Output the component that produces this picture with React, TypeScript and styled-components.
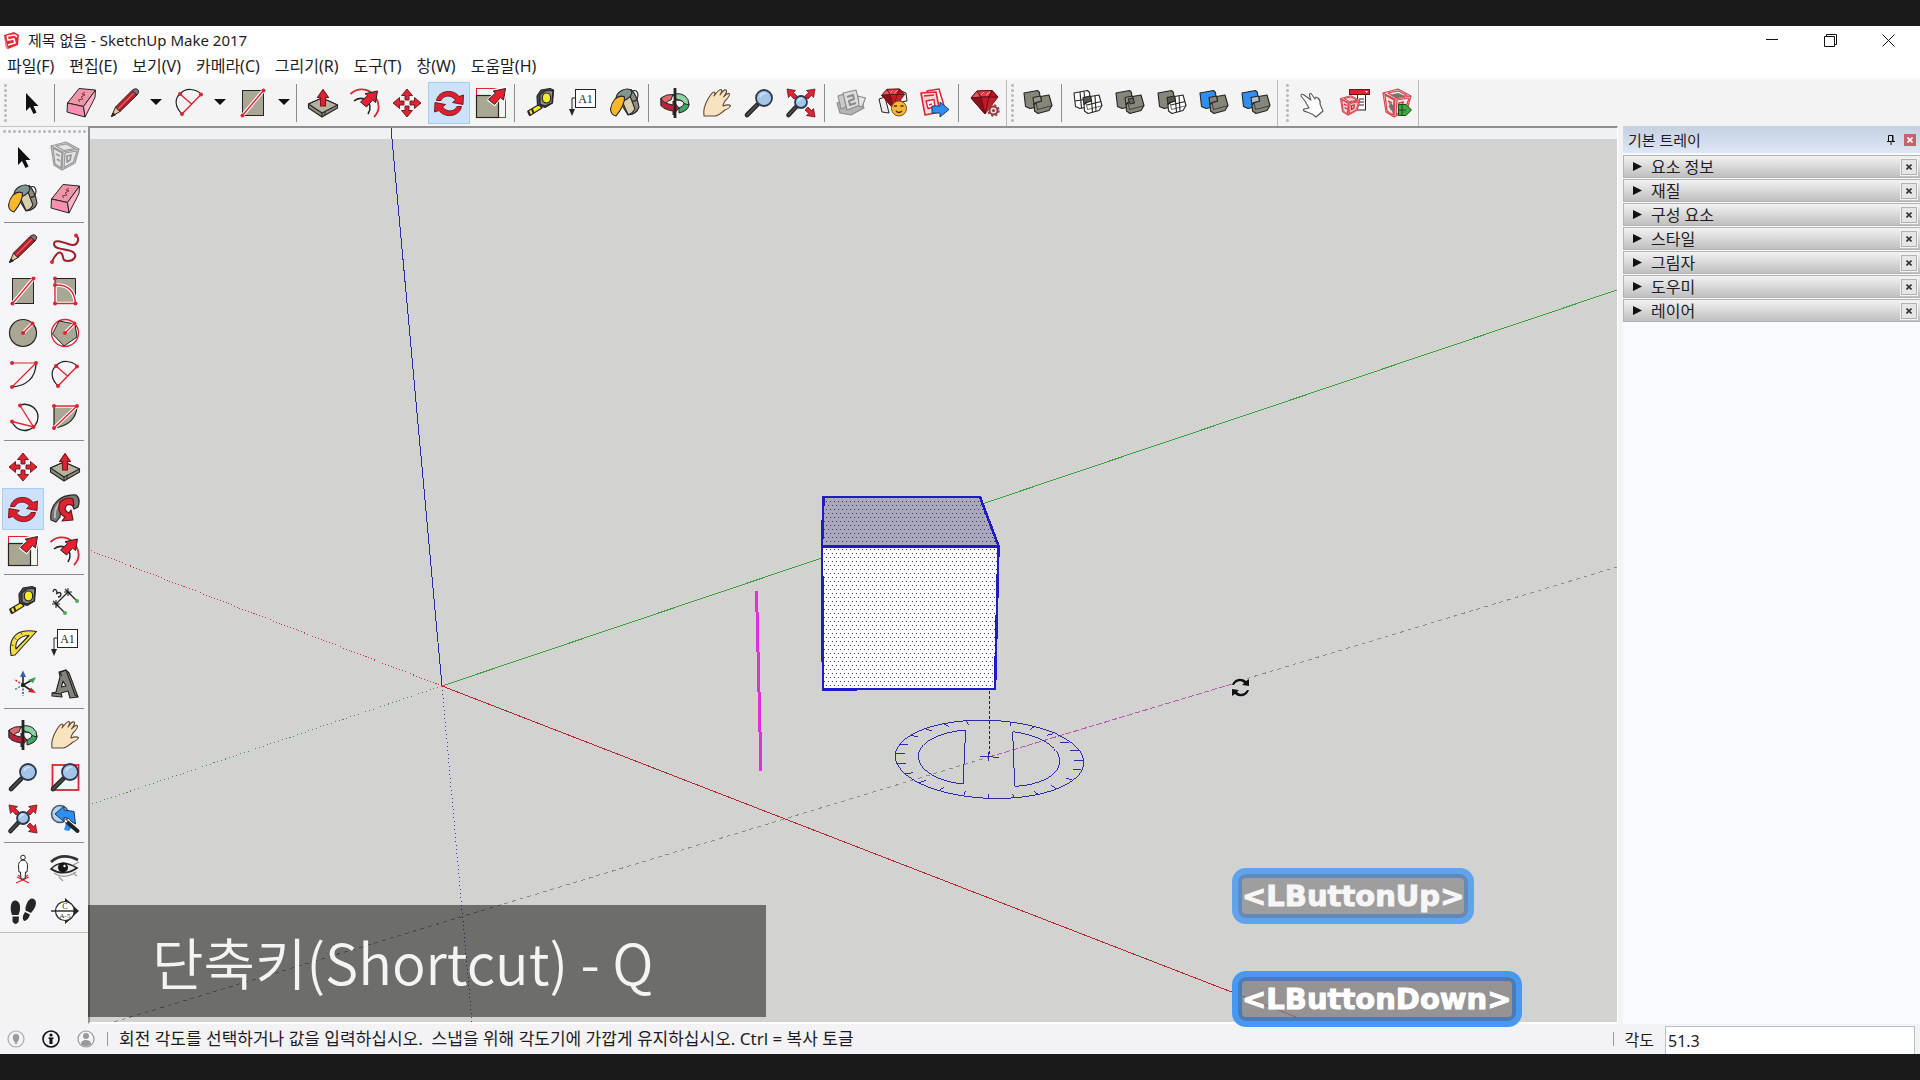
import React from 'react';
import styled, { createGlobalStyle, css } from 'styled-components';

const RED = '#dc2433';
const INK = '#242424';
const TAN = '#a9a794';
const SOLID = '#87867a';
const BLUE = '#2f8ff0';

const GlobalStyle = createGlobalStyle`
  *, *::before, *::after { box-sizing: border-box; }
  html, body { margin: 0; height: 100%; background: #1a1a1a; }
  body, button, input {
    font-family: "Noto Sans", "Noto Sans CJK KR", sans-serif;
    font-size: 15px;
    color: #1f1b24;
  }
  button { padding: 0; border: 0; background: none; cursor: default; }
`;

/* ---------- shared drawing pieces ---------- */

const Dot = ({ x, y }: { x: number; y: number }) => <circle cx={x} cy={y} r="2" fill={RED} />;

const RedLine = ({ d }: { d: string }) => (
  <>
    <path d={d} fill="none" stroke="#fff" strokeWidth="3.6" />
    <path d={d} fill="none" stroke={RED} strokeWidth="1.4" />
  </>
);

const Lens = ({ cx = 21, cy = 11, r = 8, hx = 4, hy = 28 }) => (
  <>
    <path d={`M${cx - r * 0.8} ${cy + r * 0.8} L${hx} ${hy}`} stroke={INK} strokeWidth="4.6" strokeLinecap="round" />
    <path d={`M${cx - r * 0.9} ${cy + r * 0.9} L${hx} ${hy}`} stroke="#4b4b4e" strokeWidth="2" strokeLinecap="round" />
    <circle cx={cx} cy={cy} r={r} fill="#a4c4ea" stroke="#2d3a4c" strokeWidth="1.8" />
    <path d={`M${cx - r * 0.5} ${cy - r * 0.1} Q${cx - r * 0.4} ${cy - r * 0.6} ${cx + r * 0.2} ${cy - r * 0.6}`} fill="none" stroke="#d3e4f7" strokeWidth="1.6" />
  </>
);

const BigArrow = () => (
  <path d="M30.5 1.5 L28.5 13 L25.5 10.5 L19.5 17.5 L13.5 12.5 L20.5 6 L18 4.2 Z" fill="#e6202f" stroke={INK} strokeWidth="1" />
);

const Gem = () => (
  <g stroke="#5e1017" strokeWidth="0.9" strokeLinejoin="round">
    <path d="M2 11 L8 4 L23 3.500 L29 10 L16 27 Z" fill="#c91d2a" />
    <path d="M8 4 L12 10 L2 11 Z" fill="#e85a5f" />
    <path d="M8 4 L23 3.500 L20 10 L12 10 Z" fill="#e23a44" />
    <path d="M23 3.500 L29 10 L20 10 Z" fill="#b31722" />
    <path d="M2 11 L12 10 L16 27 Z" fill="#8f0f1a" />
    <path d="M12 10 L20 10 L16 27 Z" fill="#c21a26" />
    <path d="M12 8 L15 5 M17 8 L21 5" stroke="#ffb9b9" />
  </g>
);

const WireHouse = ({ color, fill }: { color: string; fill: string }) => (
  <g stroke={color} strokeLinejoin="round" fill="none" strokeWidth="1.2">
    <path d="M2 5 L17 1 L30 8 L26 22 L13 29 L5 24 Z" fill={fill} />
    <path d="M2 5 L14 11 L30 8 M14 11 L13 29 M4 7 L13 12 L12 27 L6 23 Z M16 12 L28 10 L24.500 21 L15 26.500 Z M7 5 L17 2.800 L26 7.500 L15 9.500 Z" />
    <path d="M7 13 L11 15 M8 18 L11 20 M18 15 L22 14 L21 19 L18 21 Z" strokeWidth="1.800" />
  </g>
);

const SOLID_A = 'M2 6 L15.500 3.500 L17.500 5.500 L18.500 18 L13 20.500 L8 21.500 L3.500 19.500 Z';
const SOLID_B = 'M14 15.500 L19.500 14 L18.500 9.500 L27 8 L30 18.500 L27 23.500 L16 26.500 L12.500 24 L12 17.500 Z';
const SOLID_AB = 'M11 10.500 L18.500 9 L19.500 14 L14 15.500 L12 17.500 Z';

const SolidPair = ({ a, b, ab, wireA, wireB }: { a: string; b: string; ab: string; wireA?: boolean; wireB?: boolean }) => (
  <g stroke={INK} strokeWidth="1.100" strokeLinejoin="round">
    <path d={SOLID_A} fill={a} />
    <path d={SOLID_B} fill={b} />
    <path d={SOLID_AB} fill={ab} />
    <path d="M14 15.500 L15.500 22.500 M15.500 22.500 L27 19.500 L30 18.500" fill="none" strokeWidth="0.700" />
    {wireA && <path d="M3 14 L12 12.500 M8 5 L9.500 21 M12 4.500 L12.500 10" fill="none" />}
    {wireB && <path d="M15 18 L29 14.500 M23 9 L24 24 M19.500 14 L20.500 25" fill="none" />}
  </g>
);

const Bucket = () => (
  <g stroke={INK} strokeWidth="1.100" strokeLinejoin="round">
    <path d="M9 12 L22 2.500 Q28 8 30 20 Q28 27 19 28 Z" fill="#8f8b80" />
    <path d="M13 14 L21 9 L26 22 Q23 27 19 27.500 Z" fill="#d8cfae" />
    <ellipse cx="15" cy="8" rx="8.500" ry="5" transform="rotate(-28 15 8)" fill="#7f9594" />
    <path d="M6 12 Q11 7.500 15.500 10 Q16 18 7 29 Q2 28 1.500 22 Q2.500 16 6 12 Z" fill="#f8b829" />
    <path d="M23 4 Q29 2 29 9 Q28 15 23 14" fill="none" />
  </g>
);

const HandShape = ({ fill }: { fill: string }) => (
  <path d="M3 29 C2 22 4 17 7 12 Q11 5 13 5 Q15 5 13 9 Q18 2 20 2.500 Q22 3 19 8 Q23 2 25 3 Q27 4 22.500 10 Q27 5 28.500 7 Q29 9 24 14 Q22 17 22 19 Q27 17 29.500 18.500 Q29 21 24 23 Q17 29 14 29 Z" fill={fill} stroke="#5b4a35" strokeWidth="1.100" strokeLinejoin="round" />
);

const half = 'M3.500 13.500 C5.500 3 20.500 1.500 26 9.500 L30.500 8 L30 17.500 L19.500 15.500 L22.500 13 C18.500 7.500 10.500 8 8 13.500 Z';

const icons: Record<string, React.ReactNode> = {
  select: <path d="M11 6 V24 L15 20 L18.500 27 L21.500 25.500 L18.500 19 H23.500 Z" fill="#111" />,
  eraser: (
    <g stroke={INK} strokeWidth="1" strokeLinejoin="round">
      <path d="M14 1.500 L30.500 3 L18.500 19.500 L2.500 16 Z" fill="#f096a6" />
      <path d="M2.500 16 L18.500 19.500 L20 30 L2 25 Z" fill="#ff8fb0" />
      <path d="M30.500 3 L30 10.500 L20 30 L18.500 19.500 Z" fill="#ffb3c9" />
      <path d="M20 5 L17 7 L20 8 L16 10 L18 12 L13 13 L15 15" fill="none" stroke="#803648" />
    </g>
  ),
  pencil: (
    <g stroke={INK} strokeWidth="1" strokeLinejoin="round">
      <path d="M2.500 29.500 L6.500 20 L11 24.500 Z" fill="#e6c795" />
      <path d="M6.500 20 L23 3.500 L28 8 L11 24.500 Z" fill="#b7202b" />
      <path d="M9 22 L25.500 5.500" stroke="#e85b5f" strokeWidth="1.500" />
      <path d="M23 3.500 Q27 0 29.500 3.500 Q30.500 5 28 8 Z" fill="#8b6e74" />
      <path d="M2.500 29.500 L4 26 L6.500 27.800 Z" fill={INK} />
    </g>
  ),
  arc2: (
    <>
      <path d="M9 27 C1 19 2 11 7 7 C13 0 23 2 28 7" fill="none" stroke={INK} strokeWidth="1.200" />
      <path d="M9 27 L28.500 7 M7 7 L18.500 17" stroke={RED} strokeWidth="1.400" />
      <Dot x={9} y={27} /><Dot x={28} y={7.5} /><Dot x={7} y={7} />
    </>
  ),
  rect: (
    <>
      <rect x="5.500" y="3.500" width="21" height="25" fill={TAN} stroke={INK} />
      <RedLine d="M5.500 28.500 L26.500 3.500" />
      <Dot x={5.5} y={28.5} /><Dot x={26.5} y={3.5} />
    </>
  ),
  push: (
    <g stroke={INK} strokeWidth="1.100" strokeLinejoin="round">
      <path d="M1.500 17 L15 11 L30.500 18 V21 L15 30 L1.500 21 Z" fill="#8f8d7c" />
      <path d="M1.500 17 L15 11 L30.500 18 L15 26 Z" fill="#b5b3a0" />
      <path d="M15 26 V30 M18 24.500 V28" />
      <path d="M16 2.500 L21.500 10.500 H18.500 V19 H13.500 V10.500 H10.500 Z" fill={RED} stroke="#7d1119" />
    </g>
  ),
  offset: (
    <>
      <path d="M1.500 7 C10 -1 22 2 27 11 C31 18 30 25 25 30" fill="none" stroke={RED} strokeWidth="1.800" />
      <path d="M5 14 C13 7 26 15 19 27" fill="none" stroke={INK} strokeWidth="1.600" />
      <g transform="translate(-2 2.500)"><BigArrow /></g>
    </>
  ),
  move: (
    <g fill={RED} stroke="#6d121a" strokeWidth="0.900" strokeLinejoin="round">
      {[0, 90, 180, 270].map((a) => (
        <path key={a} transform={`rotate(${a} 16 16)`} d="M16 2 L21.500 8.500 H18 V13 H14 V8.500 H10.500 Z" />
      ))}
    </g>
  ),
  rotate: (
    <g fill="#dd1f2d" stroke="#6d121a" strokeWidth="0.900" strokeLinejoin="round">
      <path d={half} />
      <path d={half} transform="rotate(180 16 16.500)" />
    </g>
  ),
  scale: (
    <>
      <rect x="1.500" y="1.500" width="29" height="29" fill="none" stroke={RED} />
      <rect x="1.500" y="8.500" width="22" height="22" fill={TAN} stroke={INK} strokeWidth="1.200" />
      <path d="M31 1 L29 12 L26 9.500 L19.500 17.500 L14 13 L20.500 5.500 L18 3.500 Z" fill={RED} stroke="#fff" strokeWidth="3" />
      <BigArrow />
    </>
  ),
  tape: (
    <g stroke={INK} strokeWidth="1.200" strokeLinejoin="round">
      <path d="M3 24 L14 17.500 L17 21 L5 28.500 Z" fill="#f4e52b" />
      <path d="M3 24 L5 28.500 M7 22 L8.500 26" strokeWidth="2" />
      <path d="M12 9 L16 3 L25 1.500 L28.500 3 L27.500 16 L20 20.500 L12.500 18 Z" fill="#45464a" />
      <path d="M15 8 L20 4 L28 3.500 L27 16 L20 19 L15 17 Z" fill="#8c8d8a" />
      <ellipse cx="21.500" cy="11" rx="4.200" ry="5" fill="#f7ec2e" />
    </g>
  ),
  text: (
    <>
      <path d="M9 11 H5 V24" fill="none" stroke={INK} />
      <path d="M2 22 H8 L5 29 Z" fill={INK} />
      <rect x="8.500" y="2.500" width="20" height="18" fill="#fff" stroke={INK} />
      <text x="18.500" y="15.500" textAnchor="middle" fontFamily="Liberation Serif, serif" fontSize="12" fill={INK}>A1</text>
    </>
  ),
  bucket: <Bucket />,
  orbit: (
    <g stroke={INK} strokeWidth="1" strokeLinejoin="round">
      <path d="M17 7 L21 10 Q30 12 30 18 Q29 24 20 26 V21 Q25 19 25 16.500 Q24 13 17 13Z" fill="#3fa465" />
      <path d="M14 8 Q20 5 26 9 Q30 12 30 18 L25 16.500 Q24 13 18 12.500 Z" fill="#8fd3a5" />
      <path d="M2 11 Q7 7 14 7.500 L12 13 Q7 14 7 17 L2 19 Z" fill="#d96a6e" />
      <path d="M2 11 Q3 16 14 18 V14 L20 21 L14 28 V24 Q2 22 2 17 Z" fill="#b8223a" />
      <path d="M16 1 V31" stroke={INK} strokeWidth="2.800" />
    </g>
  ),
  hand: <HandShape fill="#f8e2bf" />,
  zoom: <Lens />,
  extents: (
    <>
      <Lens cx={16} cy={15} r={6} hx={3.5} hy={28} />
      {[0, 90, 180].map((a) => (
        <path key={a} transform={`rotate(${a} 16 16)`} d="M2 2 L10.500 3.500 L8.200 5.500 L12 9 L9 12 L5.500 8.200 L3.500 10.500 Z" fill={RED} stroke="#6d121a" strokeWidth="0.800" />
      ))}
    </>
  ),
  warehouse: (
    <g stroke="#8b8b8b" strokeWidth="1.100" strokeLinejoin="round" fill="#c9c9c9">
      <path d="M2 16 L9 14 L27 15 L29 21 L16 28 L5 26 Z" fill="#b4b4b4" />
      <path d="M3 9 L9 7 L11 20 L6 22 Z" />
      <path d="M8 6 L21 3 L25 18 L12 23 Z" fill="#ddd" />
      <path d="M23 9 L30.500 11 L27 20 L24 19 Z" fill="#e5e5e5" />
      <path d="M12 10 L18 8 L19 12 L14 14 L15 18 L21 16" fill="none" strokeWidth="2" />
    </g>
  ),
  extension: (
    <g strokeLinejoin="round">
      <path d="M2 12 L8 10 L12 26 L5 25 Z M22 3 L29 6 L30 14 L24 15 Z" fill="#eee" stroke={INK} />
      <g transform="translate(3 -1) scale(.85)"><Gem /></g>
      <circle cx="22" cy="21.500" r="7.500" fill="#f6b53a" stroke="#7e5410" />
      <path d="M17 19 h3 M23.500 19 h3 M19 24 q3 3 6 0" fill="none" stroke="#4b2e06" strokeWidth="1.500" />
    </g>
  ),
  layout: (
    <g strokeLinejoin="round">
      <path d="M8 4 L20 2 L26 22 L13 26 Z" fill="#fff" stroke={RED} strokeWidth="1.500" />
      <path d="M2 6 L17 5 L21 25 L6 28 Z" fill="#fbd9da" stroke={RED} strokeWidth="1.600" />
      <path d="M5 9 L15 8 M7 14 L15 12.500 L16 20 L9 21.500 Z M10 18 L13 17" fill="#fff" stroke={RED} strokeWidth="1.400" />
      <path d="M13 19 H21 V15 L30 22.500 L21 30 V26 H13 Z" fill={BLUE} stroke="#173c6b" />
    </g>
  ),
  ruby: (
    <>
      <Gem />
      <circle cx="24.500" cy="23.500" r="4" fill="#f0dfe0" stroke="#963b43" strokeWidth="2" />
      <circle cx="24.500" cy="23.500" r="5.400" fill="none" stroke="#963b43" strokeWidth="1.600" strokeDasharray="2.200 2.040" />
      <circle cx="24.500" cy="23.500" r="1.600" fill="#963b43" />
    </>
  ),
  shell: <SolidPair a={SOLID} b={SOLID} ab="#98978a" />,
  intersect: <SolidPair a="#fff" b="#fff" ab="#57574f" wireA wireB />,
  union: (
    <>
      <SolidPair a={SOLID} b={SOLID} ab="#98978a" />
      <path d="M14 12 L19 11 L20.500 16 L16 17 Z" fill="#66655c" stroke={INK} />
    </>
  ),
  subtract: <SolidPair a={SOLID} b="#fff" ab="#57574f" wireB />,
  trim: <SolidPair a={BLUE} b={SOLID} ab={SOLID} />,
  split: <SolidPair a={BLUE} b={SOLID} ab="#b9bcc2" />,
  pointer: (
    <path d="M4 9 Q4 6 7 8 L14 13 Q11 6 14 6.500 L18 12 Q18 9 21 11 Q24 14 23 17 L26 24 L19 30 Q16 27 10 25 Q5 24 7 22 L12 21 L8 14 Z" fill="#fff" stroke="#555" strokeWidth="1.100" strokeLinejoin="round" />
  ),
  attributes: (
    <>
      <rect x="18.500" y="5" width="8" height="18" fill="#fff" stroke={INK} />
      <path d="M20 12 h5 M20 15 h5 M20 18 h5" stroke={INK} />
      <g transform="translate(0 8) scale(.7)"><WireHouse color={RED} fill="#ded5d5" /></g>
      <rect x="10.500" y="2.500" width="20" height="5" fill={RED} stroke="#6d121a" />
      <path d="M26 4 h3 l-1.500 2 z" fill="#fff" />
    </>
  ),
  interact: (
    <>
      <g transform="translate(0 1)"><WireHouse color="#dc4450" fill="#efe6e6" /></g>
      <path d="M9 8 L17 6 L24 9 L15 11 Z M8 15 L12 18 V25 L9 22 Z" fill="#76756c" />
      <path d="M17.500 17.500 H25 L30.500 23 L25 28.500 H17.500 Z" fill="#40a840" stroke="#164e18" />
      <path d="M21 17.500 V28.500 M17.500 23 H25" stroke="#164e18" />
    </>
  ),
  component: <WireHouse color="#999" fill="#e3e3e3" />,
  freehand: (
    <>
      <path d="M3 29 C6 22 10 17 13 21 C15 25 13 28 19 28 C25 28 28 23 25 20 C22 15 5 18 5 11 C5 4 20 12 24 12 C29 12 31 4 27 3" fill="none" stroke="#9b1f2b" strokeWidth="2" />
      <Dot x={3} y={29} /><Dot x={27} y={2.5} />
    </>
  ),
  rotrect: (
    <>
      <path d="M6 3.500 H26.500 V28.500 H6 Z" fill={TAN} stroke={INK} />
      <RedLine d="M6 28.500 V10 Q25 9 26.500 28.500 Z" />
      <Dot x={6} y={3.5} /><Dot x={6} y={10} /><Dot x={6} y={28.5} /><Dot x={26.5} y={28.5} />
    </>
  ),
  circle: (
    <>
      <circle cx="16" cy="16" r="13.500" fill={TAN} stroke={INK} strokeWidth="1.200" />
      <RedLine d="M16 16 L25.500 6.500" /><Dot x={16} y={16} /><Dot x={25.5} y={6.5} />
    </>
  ),
  polygon: (
    <>
      <circle cx="16" cy="16" r="13.500" fill="none" stroke={RED} strokeWidth="1.300" />
      <path d="M10 4 L26 7 L28 20 L15 29 L3.500 17 Z" fill={TAN} stroke={INK} />
      <RedLine d="M16 16 L25.500 6.500" /><Dot x={16} y={16} /><Dot x={25.5} y={6.5} />
    </>
  ),
  arc1: (
    <>
      <path d="M5 28 C18 27 29 20 29 4" fill="none" stroke={INK} strokeWidth="1.300" />
      <path d="M5 4 H29 L5 28" fill="none" stroke={RED} strokeWidth="1.200" />
      <Dot x={5} y={4} /><Dot x={29} y={4} /><Dot x={5} y={28} />
    </>
  ),
  arc3: (
    <>
      <path d="M13 4 C23 1 31 8 31 16 C31 29 13 36 5 21" fill="none" stroke={INK} strokeWidth="1.300" />
      <path d="M13 4.500 L26.500 26 L5 20.500" fill="none" stroke={RED} strokeWidth="1.300" />
      <Dot x={13} y={4.5} /><Dot x={26.5} y={26} /><Dot x={5} y={20.5} />
    </>
  ),
  pie: (
    <>
      <path d="M5 5 H28 Q27 24 5 27 Z" fill={TAN} stroke={INK} strokeWidth="1.200" />
      <RedLine d="M5 5 H28 L5 27" />
      <Dot x={5} y={5} /><Dot x={28} y={5} /><Dot x={5} y={27} />
    </>
  ),
  follow: (
    <g stroke={INK} strokeWidth="1.200" strokeLinejoin="round">
      <path d="M2 27 C0 11 12 1 27 2 Q32 6 29 14 L25 16 Q23 9 17 11 Q11 15 11 24 L7 29 Z" fill="#797a76" />
      <path d="M6 25 Q5 14 12 9" fill="none" stroke="#c0c0bb" strokeWidth="1.800" />
      <path d="M11 9 Q18 3 24 6 L25 13 Q17 9 16 16 Q17 19 20 20 L22 17 L24 27 L13 28 L16 24 Q7 19 11 9 Z" fill={RED} stroke="#6d121a" />
    </g>
  ),
  dimension: (
    <>
      <path d="M7 19 L19 7 M7 19 L15 27 M19 7 L27 15" stroke={INK} strokeWidth="1.200" />
      <path d="M3 19 H11 M7 15 V23 M4 16 L10 22 M15 7 H23 M19 3 V11 M16 4 L22 10" stroke={INK} strokeWidth="1.100" />
      <path d="M4 7 Q5 3 7 5 Q9 8 7 9 Q11 6 12 9 Q12 12 9 12" fill="none" stroke={INK} strokeWidth="1.300" />
      <circle cx="16" cy="28" r="2" fill="#55a855" /><circle cx="28" cy="16" r="2" fill="#55a855" />
    </>
  ),
  protractor: (
    <g stroke={INK} strokeWidth="1.100" strokeLinejoin="round" fillRule="evenodd">
      <path d="M29.500 4.500 Q12 1.500 6 11 Q2 18 4 28.500 L8 28 Z M22 8.500 L9 22 Q8 17 11 13 Q15 8.500 22 8.500 Z" fill="#f3dc45" />
      <path d="M4.500 18 l2 .5 M7.500 11 l2 1.500 M14 5.500 l1 2" fill="none" strokeWidth="0.800" />
    </g>
  ),
  axes: (
    <>
      <path d="M16 16 V27" stroke="#285ea8" strokeWidth="1.600" strokeDasharray="2 1.500" />
      <path d="M16 16 L7 10" stroke="#c32f37" strokeWidth="1.500" strokeDasharray="2 1.500" />
      <path d="M16 16 L7 21" stroke="#3d9450" strokeWidth="1.500" strokeDasharray="2 1.500" />
      <path d="M16 16 V6 M16 16 L25 11 M16 16 L25 22" stroke={INK} strokeWidth="1.600" />
      <path d="M16 1.500 L19 8 H13 Z" fill="#2c62b8" />
      <path d="M29 8 L26 14 L21 11 Z" fill="#3d9a52" />
      <path d="M29 24 L24 18.500 L21 23 Z" fill="#c5252f" />
      <circle cx="16" cy="16" r="2.200" fill={INK} />
    </>
  ),
  text3d: (
    <g stroke={INK} strokeWidth="1.100" strokeLinejoin="round">
      <path d="M10 3 L17 1 L20 4 L29 28 L21 29 L19 22 L12 24 L13 28 L3 27 L3 24 L7 23 L11 8 Z M14 12 L12.500 18 L17 17 Z" fill="#85847c" fillRule="evenodd" />
      <path d="M17 1 L26 26 L29 28 M3 24 L12 25 M17 1 L11 3.500 L13 7" fill="none" />
    </g>
  ),
  zoomwin: (
    <>
      <rect x="3.500" y="4" width="26" height="25" fill="none" stroke={RED} strokeWidth="1.800" />
      <Lens />
    </>
  ),
  previous: (
    <>
      <circle cx="11" cy="11" r="8.500" fill="#b9d0ea" stroke="#40566f" strokeWidth="1.500" />
      <path d="M6 11 L15 3 V7 L25 8.500 L26.500 21 L23 19 Q20 14 15 14.500 V18.500 Z" fill={BLUE} stroke="#153963" strokeLinejoin="round" />
      <path d="M15 27 L17 20 L23 24 L20 28 Z" fill={BLUE} />
      <path d="M18 19 L28.500 28" stroke={INK} strokeWidth="4" strokeLinecap="round" />
      <path d="M16 17.500 L18 19" stroke="#fff" strokeWidth="2" />
    </>
  ),
  camera: (
    <>
      <path d="M10 24 L22 30 M22 24 L9 30 M11 22 L16 26 L21 22" stroke={RED} strokeWidth="1.200" fill="none" />
      <path d="M16 7 Q11 8 11.500 14 L12 19 H13.500 L14 26 H18 L18.500 19 H20 L20.500 14 Q21 8 16 7Z" fill="#fff" stroke={INK} />
      <circle cx="16" cy="4.500" r="2.300" fill="#fff" stroke={INK} />
    </>
  ),
  eye: (
    <>
      <path d="M2 9 Q13 -1 29 7" fill="none" stroke="#333" strokeWidth="2.600" />
      <path d="M2 16 Q12 5 28 15 Q15 24 2 16 Z" fill="#e9e9e9" stroke={INK} strokeWidth="1.600" />
      <circle cx="14" cy="14.500" r="5" fill="#161616" /><circle cx="15.500" cy="13" r="1.200" fill="#fff" />
      <path d="M5 20 Q15 27 27 19 M10 24 L14 28 M24 12 L30 9 M24 20 L28 23" fill="none" stroke="#999" strokeWidth="1.200" />
    </>
  ),
  walk: (
    <g fill="#252525">
      <path d="M4 10 Q5 5 9 5.500 Q14 7 13 15 L11.500 20 H5 Q3 14 4 10 Z M5.500 21.500 H12 L11.500 27 Q8 31 5.500 26.500 Z" />
      <path d="M20 8 Q23 2 27 4 Q31 7 27 14 L24 18 L18.500 15.500 Q18 12 20 8 Z M18 17 L23 19.500 Q21 26 17 26 Q14 23 18 17 Z" />
    </g>
  ),
  section: (
    <>
      <circle cx="16" cy="16" r="9.500" fill="#fff" stroke={INK} strokeWidth="1.200" />
      <path d="M16 3 L23 9 Q19 6.500 16 6.500 Z M16 29 L23 23 Q19 25.500 16 25.500 Z" fill={INK} />
      <path d="M2 16 H29" stroke={INK} strokeWidth="1.400" /><path d="M24.500 11 L30 16 L24.500 21 Z" fill={INK} />
      <text x="16" y="14" fontSize="8" textAnchor="middle" fontFamily="Liberation Serif, serif" fill={INK}>C</text>
      <text x="16" y="23" fontSize="7" textAnchor="middle" fontFamily="Liberation Serif, serif" fill={INK}>A-5</text>
    </>
  ),
};

/* ---------- window chrome ---------- */

const Shell = styled.div`
  height: 100vh;
  padding: 26px 0;
  background: #1a1a1a;
`;

const Window = styled.div`
  height: 100%;
  display: flex;
  flex-direction: column;
  background: #f3f3f3;
`;

const TitleBar = styled.header`
  display: flex;
  align-items: center;
  height: 28px;
  padding: 0 3px;
  background: #fff;
`;

const Title = styled.h1`
  flex: 1;
  margin: 0;
  padding-left: 8px;
  font-size: 15px;
  font-weight: 400;
  line-height: 26px;
`;

const WindowButton = styled.button`
  width: 58px;
  height: 28px;
  display: grid;
  place-items: center;
`;

const MenuBar = styled.nav`
  display: flex;
  height: 24px;
  padding-left: 7px;
  gap: 15px;
  background: #fff;
`;

const MenuItem = styled.button`
  font-size: 16px;
  line-height: 24px;
  white-space: nowrap;
`;

const TopBar = styled.div`
  display: flex;
  height: 48px;
  border-top: 2px solid #f8f8f8;
`;

const ToolGroup = styled.div`
  display: flex;
  align-items: center;
  background: #f5f4f5;
  border-right: 1px solid #bdbdbd;

  &:last-child {
    padding-left: 4px;
  }
`;

const Grip = styled.span<{ $horizontal?: boolean }>`
  flex: none;
  ${(p) =>
    p.$horizontal
      ? css`
          height: 9px;
          margin: 0 2px;
          background: radial-gradient(circle, #bbb 1px, transparent 2px) 0 2px / 5px 5px repeat-x;
        `
      : css`
          width: 10px;
          height: 41px;
          background: radial-gradient(circle, #bbb 1px, transparent 2px) 3px 0 / 5px 5px repeat-y;
        `}
`;

const Tool = styled.button<{ $active?: boolean }>`
  flex: none;
  width: 42px;
  height: 42px;
  display: grid;
  place-items: center;
  border: 1px solid ${(p) => (p.$active ? '#a3cdf3' : 'transparent')};
  background: ${(p) => (p.$active ? '#cbe2fa' : 'transparent')};
`;

const SplitTool = styled.div`
  display: flex;
  margin-left: 2px;
`;

const DropButton = styled.button`
  width: 20px;
  height: 42px;
  display: grid;
  place-items: center;
`;

const Divider = styled.span<{ $horizontal?: boolean }>`
  flex: none;
  background: #8c8c8c;
  ${(p) =>
    p.$horizontal
      ? css`
          height: 1px;
          margin: 2px 4px 5px;
        `
      : css`
          width: 1px;
          height: 38px;
          margin: 0 5px 0 2px;
        `}
`;

const Body = styled.div`
  flex: 1;
  min-height: 0;
  display: flex;
`;

const SideBar = styled.aside`
  flex: none;
  width: 88px;
  border-top: 1px solid #c4c4c4;
  display: flex;
  flex-direction: column;
`;

const SidePanel = styled.div`
  display: flex;
  flex-direction: column;
  background: #f5f4f6;
  border-bottom: 1px solid #bdbdbd;
`;

const SideGrid = styled.div`
  display: grid;
  grid-template-columns: 42px 42px;
  padding-left: 2px;
`;

const Viewport = styled.main`
  position: relative;
  flex: 1;
  min-width: 0;
  display: flex;
  flex-direction: column;
  border-top: 2px solid #8f8f8f;
  border-left: 2px solid #8f8f8f;
  border-right: 1px solid #fff;
  border-bottom: 2px solid #fff;
  background: linear-gradient(#f0f1f3 11px, #d2d2d0 11px);
`;

const Scene = styled.svg`
  flex: 1;
  width: 100%;
  min-height: 0;
`;

const Caption = styled.p`
  position: absolute;
  left: -2px;
  bottom: 5px;
  width: 678px;
  max-width: 100%;
  margin: 0;
  padding: 16px 64px;
  background: rgba(0, 0, 0, 0.48);
  color: #f4f4f4;
  font-family: "Noto Sans CJK KR", sans-serif;
  font-size: 56px;
  font-weight: 350;
  line-height: 80px;
  white-space: nowrap;
`;

const KeyStack = styled.div`
  position: absolute;
  left: 1142px;
  bottom: -5px;
  display: flex;
  flex-direction: column;
  align-items: flex-start;
  gap: 47px;
`;

const KeyCap = styled.kbd<{ $faded?: boolean }>`
  display: block;
  padding: 4px;
  border: 6px solid #4699f3;
  border-radius: 14px;
  background: rgba(128, 126, 128, 0.75);
  box-shadow: inset 0 0 0 4px #4b7ab5;
  opacity: ${(p) => (p.$faded ? 0.82 : 1)};
  color: #fff;
  font-family: "DejaVu Sans", sans-serif;
  font-size: 29px;
  font-weight: 700;
  line-height: 36px;
  -webkit-text-stroke: 1px #fff;
`;

const Tray = styled.aside`
  flex: none;
  width: 297px;
  margin-left: 5px;
  background: #f7faff;
`;

const TrayHeader = styled.div`
  display: flex;
  align-items: center;
  height: 27px;
  padding: 0 4px 0 5px;
  gap: 9px;
  background: linear-gradient(#c5d0e0, #dde7f5);
`;

const TrayTitle = styled.h2`
  flex: 1;
  margin: 0;
  font-size: 15px;
  font-weight: 400;
  line-height: 24px;
`;

const PinButton = styled.button`
  width: 8px;
  height: 12px;
  display: grid;
  place-items: center;
`;

const TrayClose = styled.button`
  width: 12px;
  height: 12px;
  display: grid;
  place-items: center;
  background: #c4636a;
`;

const TrayList = styled.ul`
  list-style: none;
  margin: 0;
  padding: 2px 0 0;
  display: flex;
  flex-direction: column;
  gap: 1px;
`;

const TrayRow = styled.li`
  display: flex;
  align-items: center;
  height: 23px;
  padding: 0 3px 0 9px;
  border: 1px solid #b3b3b3;
  border-right: 0;
  background: linear-gradient(#f2f2f2, #bfbfbf);
`;

const TrayToggle = styled.button`
  flex: 1;
  display: flex;
  align-items: center;
  gap: 9px;
  line-height: 20px;
  font-size: 16px;
  text-align: left;
`;

const RowClose = styled.button`
  width: 16px;
  height: 16px;
  display: grid;
  place-items: center;
  border: 1px solid #b0b0b0;
  outline: 1px solid #f4f4f4;
  background: #e6e6e6;
`;

const StatusBar = styled.footer`
  display: flex;
  align-items: center;
  height: 30px;
  padding: 0 5px 0 6px;
  background: #f3f2f4;
`;

const StatusIcons = styled.div`
  display: flex;
  gap: 15px;
`;

const StatusButton = styled.button`
  width: 20px;
  height: 20px;
`;

const StatusRule = styled.span`
  width: 1px;
  height: 14px;
  margin: 0 11px;
  background: #999;
`;

const Hint = styled.span`
  flex: 1;
  font-size: 17px;
  line-height: 28px;
  white-space: pre;
`;

const Measure = styled.label`
  font-size: 16px;
  margin-right: 11px;
`;

const MeasureInput = styled.input`
  align-self: flex-end;
  width: 250px;
  height: 28px;
  padding: 0 2px;
  border: 1px solid #b6c0cd;
  border-bottom: 0;
  border-radius: 0;
  outline: 0;
  background: #fff;
  font-size: 16px;
`;

/* ---------- data ---------- */

type Item = [string, string, ('drop' | 'active')?] | null;

const menus = ['파일(F)', '편집(E)', '보기(V)', '카메라(C)', '그리기(R)', '도구(T)', '창(W)', '도움말(H)'];

const topGroups: Item[][] = [
  [
    ['select', '선택'], null,
    ['eraser', '지우개'], ['pencil', '선', 'drop'], ['arc2', '호', 'drop'], ['rect', '직사각형', 'drop'], null,
    ['push', '밀기/끌기'], ['offset', '오프셋'], ['move', '이동'], ['rotate', '회전', 'active'], ['scale', '배율'], null,
    ['tape', '줄자'], ['text', '텍스트'], ['bucket', '페인트통'], null,
    ['orbit', '궤도'], ['hand', '이동 보기'], ['zoom', '확대/축소'], ['extents', '전체 보기'], null,
    ['warehouse', '3D 웨어하우스'], ['extension', '확장 웨어하우스'], ['layout', '레이아웃'], null,
    ['ruby', '확장 관리자'],
  ],
  [['shell', '외부 셸'], null, ['intersect', '교차'], ['union', '결합'], ['subtract', '빼기'], ['trim', '자르기'], ['split', '분할']],
  [['pointer', '상호 작용'], ['attributes', '구성 요소 옵션'], ['interact', '구성 요소 속성']],
];

const sideGroups: [string, string][][] = [
  [['select', '선택'], ['component', '구성 요소 만들기'], ['bucket', '페인트통'], ['eraser', '지우개']],
  [
    ['pencil', '선'], ['freehand', '자유곡선'], ['rect', '직사각형'], ['rotrect', '회전된 직사각형'], ['circle', '원'],
    ['polygon', '다각형'], ['arc1', '호'], ['arc2', '2점 호'], ['arc3', '3점 호'], ['pie', '파이'],
  ],
  [['move', '이동'], ['push', '밀기/끌기'], ['rotate', '회전'], ['follow', '따라가기'], ['scale', '배율'], ['offset', '오프셋']],
  [['tape', '줄자'], ['dimension', '치수'], ['protractor', '각도기'], ['text', '텍스트'], ['axes', '축'], ['text3d', '3D 텍스트']],
  [['orbit', '궤도'], ['hand', '이동 보기'], ['zoom', '확대/축소'], ['zoomwin', '창 확대'], ['extents', '전체 보기'], ['previous', '이전']],
  [['camera', '카메라 배치'], ['eye', '둘러보기'], ['walk', '걷기'], ['section', '단면 평면']],
];

const trays = ['요소 정보', '재질', '구성 요소', '스타일', '그림자', '도우미', '레이어'];

const ticks =
  'M471 821H497 M475 850H500 M497 882L523 878 M540 908L562 901 M603 930L614 922 M674 946L679 934 M748 956V942 M825 952L820 942 M896 942L884 932 M955 927L936 917 M998 899L980 895 M1026 870H1002 M1034 842H1006 M1020 813L992 811 M990 786L964 787 M942 761L925 766 M887 740L874 748 M817 726L814 738 M681 722L689 734 M616 732L630 740 M558 746L578 752 M514 765L536 771 M484 793L508 794';

const Icon = ({ name }: { name: string }) => (
  <svg width="32" height="32" viewBox="0 0 32 32" fill="none" aria-hidden="true">
    {icons[name]}
  </svg>
);

const Cross = ({ color, size = 6 }: { color: string; size?: number }) => (
  <svg width={size} height={size} viewBox="0 0 6 6" aria-hidden="true">
    <path d="M0.500 0.500 L5.500 5.500 M5.500 0.500 L0.500 5.500" stroke={color} strokeWidth="1.600" />
  </svg>
);

const Model = () => (
  <Scene viewBox="91 128 1527 894" preserveAspectRatio="xMinYMin slice" shapeRendering="crispEdges" fill="none" role="img" aria-label="모델">
    <defs>
      <pattern id="dots" width="4" height="8" patternUnits="userSpaceOnUse">
        <rect width="1" height="1" x="1" y="1" fill="#34345c" />
        <rect width="1" height="1" x="3" y="5" fill="#34345c" />
      </pattern>
    </defs>
    <path d="M392 128 L443 686" stroke="#2b2ba6" />
    <path d="M443 686 L473 1022" stroke="#3c3cae" strokeDasharray="1 3" />
    <path d="M443 686 L1618 290" stroke="#3fa03f" />
    <path d="M443 686 L90 805" stroke="#4f8f4f" strokeDasharray="1 3" />
    <path d="M443 686 L1310 1022" stroke="#b02a35" />
    <path d="M443 686 L90 550" stroke="#c03a48" strokeDasharray="1 2" />
    <path d="M115 1022 L990 757 M1240 681 L1618 567" stroke="#8b8b8b" strokeDasharray="4 4" />
    <path d="M990 757 L1233 684" stroke="#b45ab0" strokeDasharray="6 2" />
    <path d="M757.500 591 L762 771" stroke="#e030dc" strokeWidth="3" />
    <path d="M825 497 H981 L1000 546 H823 Z" fill="#aaa8bc" />
    <path d="M823 546 H1000 L996 689 H824 Z" fill="#fdfdfd" />
    <path d="M825 497 H981 L1000 546 L996 689 H824 L823 546 Z" fill="url(#dots)" />
    <path d="M824.500 497 H981 L999.500 546 L996 689 H824 L823 546 Z M823 546.500 H999" stroke="#1f1cc4" strokeWidth="2.600" />
    <path d="M823 690 H858" stroke="#1f1cc4" strokeWidth="2" />
    <path d="M990.500 691 V756" stroke="#222" strokeDasharray="3 2" />
    <g transform="translate(740 480) scale(.33333)" stroke="#2b2baa" strokeWidth="3">
      <ellipse cx="751.500" cy="838" rx="283" ry="117" transform="rotate(2.300 751.500 838)" />
      <path d="M680 750 C595 757 538 790 538 828 C538 868 590 903 672 912 Z" />
      <path d="M821 755 C900 765 962 800 962 843 C962 885 905 915 827 919 Z" />
      <path d={ticks} />
      <path d="M723 829 L780 832 M748 815 V842" />
    </g>
    <g transform="translate(1232 678)" fill="#111" stroke="#e8e8e8" strokeWidth="1" paintOrder="stroke" shapeRendering="auto">
      <path d="M1 7 C3 0 11 -1 15 3 L18 1 L18 8 L11 7 L13 5 C10 2 5 3 3 7 Z" />
      <path d="M1 7 C3 0 11 -1 15 3 L18 1 L18 8 L11 7 L13 5 C10 2 5 3 3 7 Z" transform="rotate(180 9.500 9.500)" />
    </g>
  </Scene>
);

export default function App() {
  return (
    <Shell>
      <GlobalStyle />
      <Window>
        <TitleBar>
          <svg width="17" height="19" viewBox="0 0 17 19" aria-hidden="true">
            <path d="M1 4 L11 1 L16 4 L15 14 L5 18 L3 17 Z" fill="#e02b36" />
            <path d="M4 5 L12 4 L14 6 M4 5 L5 9 L11 8 L12 12 L5 14" fill="none" stroke="#fff" strokeWidth="1.600" />
            <path d="M1 4 L3 17 L5 18 L4 14 Z" fill="#f08a8e" />
          </svg>
          <Title>제목 없음 - SketchUp Make 2017</Title>
          <WindowButton aria-label="최소화">
            <svg width="12" height="12"><path d="M0 5.500 H12" stroke="#111" /></svg>
          </WindowButton>
          <WindowButton aria-label="이전 크기로 복원">
            <svg width="13" height="13" fill="none" stroke="#111"><path d="M.5 2.500 H10.500 V12.500 H.5 Z M2.500 2.500 V.5 H12.500 V10.500 H10.500" /></svg>
          </WindowButton>
          <WindowButton aria-label="닫기">
            <svg width="13" height="13"><path d="M.5 .5 L12.500 12.500 M12.500 .5 L.5 12.500" stroke="#111" /></svg>
          </WindowButton>
        </TitleBar>
        <MenuBar>
          {menus.map((m) => (
            <MenuItem key={m}>{m}</MenuItem>
          ))}
        </MenuBar>
        <TopBar role="toolbar">
          {topGroups.map((group, g) => (
            <ToolGroup key={g}>
              <Grip />
              {group.map((item, i) => {
                if (!item) return <Divider key={i} />;
                const [name, label, kind] = item;
                const tool = (
                  <Tool key={i} aria-label={label} $active={kind === 'active'}>
                    <Icon name={name} />
                  </Tool>
                );
                if (kind !== 'drop') return tool;
                return (
                  <SplitTool key={i}>
                    {tool}
                    <DropButton aria-label={`${label} 더 보기`}>
                      <svg width="12" height="12"><path d="M0 2 H12 L6 8 Z" fill="#111" /></svg>
                    </DropButton>
                  </SplitTool>
                );
              })}
            </ToolGroup>
          ))}
        </TopBar>
        <Body>
          <SideBar>
            <SidePanel role="toolbar">
              <Grip $horizontal />
              {sideGroups.map((group, g) => (
                <React.Fragment key={g}>
                  {g > 0 && <Divider $horizontal />}
                  <SideGrid>
                    {group.map(([name, label]) => (
                      <Tool key={name} aria-label={label} $active={name === 'rotate'}>
                        <Icon name={name} />
                      </Tool>
                    ))}
                  </SideGrid>
                </React.Fragment>
              ))}
            </SidePanel>
          </SideBar>
          <Viewport>
            <Model />
            <Caption>단축키(Shortcut) - Q</Caption>
            <KeyStack>
              <KeyCap $faded>&lt;LButtonUp&gt;</KeyCap>
              <KeyCap>&lt;LButtonDown&gt;</KeyCap>
            </KeyStack>
          </Viewport>
          <Tray>
            <TrayHeader>
              <TrayTitle>기본 트레이</TrayTitle>
              <PinButton aria-label="고정">
                <svg width="8" height="10" fill="none" stroke="#111"><path d="M1.500 6 V.5 H6 V6 M5.500 .5 V6 M0 6.500 H8 M4 7 V10" /></svg>
              </PinButton>
              <TrayClose aria-label="트레이 닫기"><Cross color="#fff" /></TrayClose>
            </TrayHeader>
            <TrayList>
              {trays.map((t) => (
                <TrayRow key={t}>
                  <TrayToggle aria-expanded="false">
                    <svg width="9" height="9" aria-hidden="true"><path d="M0 0 L9 4.500 L0 9 Z" fill="#111" /></svg>
                    {t}
                  </TrayToggle>
                  <RowClose aria-label={`${t} 닫기`}><Cross color="#333" /></RowClose>
                </TrayRow>
              ))}
            </TrayList>
          </Tray>
        </Body>
        <StatusBar>
          <StatusIcons>
            <StatusButton aria-label="지리적 위치">
              <svg width="20" height="20" fill="#999"><circle cx="10" cy="10" r="8" fill="none" stroke="#aaa" strokeWidth="1.200" /><path d="M10 16 L7 10 Q6 5 10 5 Q14 5 13 10 Z" /></svg>
            </StatusButton>
            <StatusButton aria-label="크레딧">
              <svg width="20" height="20" fill="#111"><circle cx="10" cy="10" r="8" fill="none" stroke="#111" strokeWidth="1.600" /><circle cx="10" cy="6" r="1.600" /><path d="M7.500 8.500 H12.500 V10 H11.500 V15 H8.500 V10 H7.500 Z" /></svg>
            </StatusButton>
            <StatusButton aria-label="로그인">
              <svg width="20" height="20" fill="#999"><circle cx="10" cy="10" r="8" fill="none" stroke="#999" strokeWidth="1.200" /><circle cx="10" cy="7" r="3" /><path d="M5 15.500 Q5 11 10 11 Q15 11 15 15.500 Q10 19 5 15.500Z" /></svg>
            </StatusButton>
          </StatusIcons>
          <StatusRule />
          <Hint>회전 각도를 선택하거나 값을 입력하십시오.  스냅을 위해 각도기에 가깝게 유지하십시오. Ctrl = 복사 토글</Hint>
          <StatusRule />
          <Measure htmlFor="measure">각도</Measure>
          <MeasureInput id="measure" defaultValue="51.3" />
        </StatusBar>
      </Window>
    </Shell>
  );
}
